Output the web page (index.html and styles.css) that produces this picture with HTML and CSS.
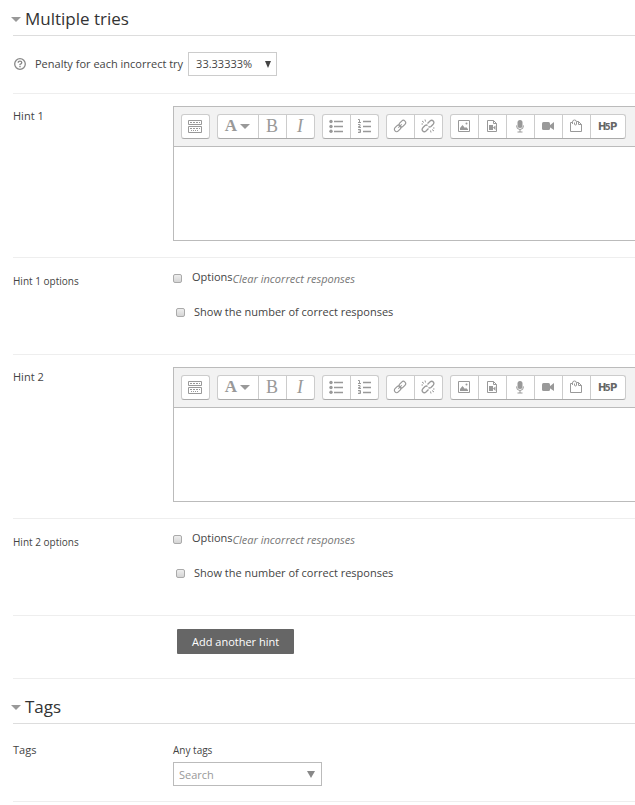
FILE: index.html
```html
<!DOCTYPE html>
<html lang="en">

<head>
    <meta charset="UTF-8">
    <meta name="viewport" content="width=device-width, initial-scale=1.0">
    <title>Multiple tries</title>
    <link rel="stylesheet" href="styles.css">
</head>

<body>
    <!-- Toolbar icons, shared by both editors -->
    <svg class="icon-sprite" aria-hidden="true">
        <symbol id="icon-toggle" viewBox="0 0 14 14">
            <path d="M.5 1.5h13v4H.5zM.5 7.5h13v6H.5z" fill="none" stroke="currentColor" />
            <path d="M2 3.5h10M2 9.5h10" stroke="currentColor" stroke-dasharray="2 1" />
            <path d="M3 11.5h8" stroke="currentColor" stroke-dasharray="1 1" />
        </symbol>
        <symbol id="icon-bullets" viewBox="0 0 14 14">
            <circle cx="2" cy="2.5" r="1.7" fill="currentColor" />
            <circle cx="2" cy="7.5" r="1.7" fill="currentColor" />
            <circle cx="2" cy="12.3" r="1.7" fill="currentColor" />
            <path d="M5 2.5h9M5 7.5h9M5 12.5h9" stroke="currentColor" stroke-width="1.4" />
        </symbol>
        <symbol id="icon-numbers" viewBox="0 0 14 14">
            <path d="M1 .5h1.5v3M1 3.5h3M1 5.5h2v2H1.5v1H4M1 10.5h2.5v3H1M1.5 12h2" fill="none" stroke="currentColor" />
            <path d="M6 2.5h8M6 7.5h8M6 12.5h8" stroke="currentColor" stroke-width="1.4" />
        </symbol>
        <symbol id="icon-link" viewBox="0 0 14 14">
            <g fill="none" stroke="currentColor" stroke-width="1.2" transform="rotate(-45 7 7)">
                <rect x="0" y="4.7" width="7.5" height="4.6" rx="2.3" />
                <rect x="6.5" y="4.7" width="7.5" height="4.6" rx="2.3" />
                <path d="M4.5 7h5" stroke-width="1" />
            </g>
        </symbol>
        <symbol id="icon-unlink" viewBox="0 0 14 14">
            <g fill="none" stroke="currentColor" stroke-width="1.3">
                <path d="M6.5 4.500 9 2q1.800-1.500 3.200 0t0 3.200L10 7.500Q8.500 8.500 7.500 7.500" />
                <path d="M7.500 9.500 5 12q-1.800 1.500-3.200 0t0-3.200L4 6.500Q5.500 5.500 6.500 6.500" />
                <path d="M1 2l2 1.500M4 .5l.5 2M13 12l-2-1.500M10 13.500l-.5-2M.5 5h1.500M12 9h1.500" stroke-width="1" />
            </g>
        </symbol>
        <symbol id="icon-image" viewBox="0 0 14 14">
            <path d="M1.5 1.5h11v11h-11z" fill="none" stroke="currentColor" />
            <path d="M3 11V9l2.500-3L8 9l1-1 2 2v1z" fill="currentColor" />
            <circle cx="9.500" cy="4.500" r="1" fill="currentColor" />
        </symbol>
        <symbol id="icon-media" viewBox="0 0 14 14">
            <path d="M2.500 1.500h6l3 3v8h-9zM8.500 1.500v3h3" fill="none" stroke="currentColor" />
            <path d="M4 6h4v5H4zM8 8.500l2.500-2v4.500z" fill="currentColor" />
        </symbol>
        <symbol id="icon-mic" viewBox="0 0 14 14">
            <rect x="4.500" y="1" width="5" height="8" rx="2.500" fill="currentColor" />
            <path d="M3.500 6.500q0 4 3.500 4t3.500-4M7 10.500v2.500M4.500 13h5" fill="none" stroke="currentColor" />
        </symbol>
        <symbol id="icon-video" viewBox="0 0 14 14">
            <rect x="1" y="3" width="8" height="8" rx="1.500" fill="currentColor" />
            <path d="M8.500 6.500 13 3v8L8.500 8z" fill="currentColor" />
        </symbol>
        <symbol id="icon-files" viewBox="0 0 14 14">
            <path d="M3 3.500H1.500v9h11V5.500L9.500 2.500H8M9.500 2.500v3h3" fill="none" stroke="currentColor" />
            <path d="M3.500 5V3q0-2 2-2t2 2v2q0 1-1 1t-1-1V3.500" fill="none" stroke="currentColor" />
        </symbol>
        <symbol id="icon-h5p" viewBox="0 0 20 14">
            <text y="11"><tspan x="0">H</tspan><tspan x="7" class="h5p-five">5</tspan><tspan x="12">P</tspan></text>
        </symbol>
    </svg>

    <form class="question-form">
        <fieldset>
            <legend><span class="caret"></span>Multiple tries</legend>

            <div class="penalty-row">
                <button type="button" class="help" aria-label="Help with penalty for each incorrect try">
                    <svg viewBox="0 0 12 12" aria-hidden="true">
                        <circle cx="6" cy="6" r="5.300" fill="none" stroke="currentColor" stroke-width="1.300" />
                        <path d="M4.200 4.800Q4.200 3.200 6 3.200t1.800 1.500Q7.800 5.500 6 6.300v1" fill="none" stroke="currentColor" stroke-width="1.300" />
                        <path d="M5.300 8h1.400v1.300H5.300z" fill="currentColor" />
                    </svg>
                </button>
                <label for="penalty">Penalty for each incorrect try</label>
                <div class="select-box">
                    <select id="penalty">
                        <option>33.33333%</option>
                    </select>
                    <span class="arrow" aria-hidden="true"></span>
                </div>
            </div>

            <div class="row hint-row">
                <label class="row-label" for="hint1">Hint 1</label>
                <div class="editor">
                    <div class="toolbar">
                        <div class="group">
                            <button type="button" aria-label="Show more buttons"><svg><use href="#icon-toggle" /></svg></button>
                        </div>
                        <div class="group">
                            <button type="button" class="styles" aria-label="Paragraph styles">A<span class="caret"></span></button>
                            <button type="button" class="serif" aria-label="Bold">B</button>
                            <button type="button" class="serif italic" aria-label="Italic">I</button>
                        </div>
                        <div class="group">
                            <button type="button" aria-label="Unordered list"><svg><use href="#icon-bullets" /></svg></button>
                            <button type="button" aria-label="Ordered list"><svg><use href="#icon-numbers" /></svg></button>
                        </div>
                        <div class="group">
                            <button type="button" aria-label="Link"><svg><use href="#icon-link" /></svg></button>
                            <button type="button" aria-label="Unlink"><svg><use href="#icon-unlink" /></svg></button>
                        </div>
                        <div class="group">
                            <button type="button" aria-label="Insert image"><svg><use href="#icon-image" /></svg></button>
                            <button type="button" aria-label="Insert media"><svg><use href="#icon-media" /></svg></button>
                            <button type="button" aria-label="Record audio"><svg><use href="#icon-mic" /></svg></button>
                            <button type="button" aria-label="Record video"><svg><use href="#icon-video" /></svg></button>
                            <button type="button" aria-label="Manage files"><svg><use href="#icon-files" /></svg></button>
                            <button type="button" class="h5p" aria-label="Insert H5P"><svg><use href="#icon-h5p" /></svg></button>
                        </div>
                    </div>
                    <textarea id="hint1"></textarea>
                </div>
            </div>

            <div class="row options-row">
                <span class="row-label small">Hint 1 options</span>
                <div class="options">
                    <div class="option">
                        <input type="checkbox" id="clear1">
                        <label for="clear1">Options<em>Clear incorrect responses</em></label>
                    </div>
                    <div class="option indent">
                        <input type="checkbox" id="shownum1">
                        <label for="shownum1">Show the number of correct responses</label>
                    </div>
                </div>
            </div>

            <div class="row hint-row">
                <label class="row-label" for="hint2">Hint 2</label>
                <div class="editor">
                    <div class="toolbar">
                        <div class="group">
                            <button type="button" aria-label="Show more buttons"><svg><use href="#icon-toggle" /></svg></button>
                        </div>
                        <div class="group">
                            <button type="button" class="styles" aria-label="Paragraph styles">A<span class="caret"></span></button>
                            <button type="button" class="serif" aria-label="Bold">B</button>
                            <button type="button" class="serif italic" aria-label="Italic">I</button>
                        </div>
                        <div class="group">
                            <button type="button" aria-label="Unordered list"><svg><use href="#icon-bullets" /></svg></button>
                            <button type="button" aria-label="Ordered list"><svg><use href="#icon-numbers" /></svg></button>
                        </div>
                        <div class="group">
                            <button type="button" aria-label="Link"><svg><use href="#icon-link" /></svg></button>
                            <button type="button" aria-label="Unlink"><svg><use href="#icon-unlink" /></svg></button>
                        </div>
                        <div class="group">
                            <button type="button" aria-label="Insert image"><svg><use href="#icon-image" /></svg></button>
                            <button type="button" aria-label="Insert media"><svg><use href="#icon-media" /></svg></button>
                            <button type="button" aria-label="Record audio"><svg><use href="#icon-mic" /></svg></button>
                            <button type="button" aria-label="Record video"><svg><use href="#icon-video" /></svg></button>
                            <button type="button" aria-label="Manage files"><svg><use href="#icon-files" /></svg></button>
                            <button type="button" class="h5p" aria-label="Insert H5P"><svg><use href="#icon-h5p" /></svg></button>
                        </div>
                    </div>
                    <textarea id="hint2"></textarea>
                </div>
            </div>

            <div class="row options-row">
                <span class="row-label small">Hint 2 options</span>
                <div class="options">
                    <div class="option">
                        <input type="checkbox" id="clear2">
                        <label for="clear2">Options<em>Clear incorrect responses</em></label>
                    </div>
                    <div class="option indent">
                        <input type="checkbox" id="shownum2">
                        <label for="shownum2">Show the number of correct responses</label>
                    </div>
                </div>
            </div>

            <div class="row add-row">
                <button type="button" class="add-hint">Add another hint</button>
            </div>
        </fieldset>

        <fieldset class="tags">
            <legend><span class="caret"></span>Tags</legend>
            <div class="row tags-row">
                <label class="row-label" for="tags">Tags</label>
                <div class="tags-field">
                    <span class="small">Any tags</span>
                    <div class="search-box">
                        <input type="text" id="tags" placeholder="Search">
                        <span class="arrow" aria-hidden="true"></span>
                    </div>
                </div>
            </div>
        </fieldset>
    </form>
</body>

</html>
```

FILE: styles.css
```css
* {
    box-sizing: border-box;
    margin: 0;
    padding: 0;
}

body {
    font-family: "Open Sans", sans-serif;
    font-size: 11px;
    line-height: 16px;
    color: #444;
    background-color: #fff;
}

button,
input,
select,
textarea {
    font: inherit;
    color: inherit;
}

button {
    cursor: pointer;
}

.icon-sprite {
    display: none;
}

.question-form {
    padding: 6px 0 0 13px;
}

fieldset {
    border: none;
    min-width: 0;
}

legend {
    display: flex;
    align-items: center;
    gap: 4px;
    width: 100%;
    height: 30px;
    padding-bottom: 3px;
    border-bottom: 1px solid #ddd;
    font-size: 17px;
    color: #333;
}

.caret {
    border: 5px solid transparent;
    border-top-color: #999;
    border-bottom: none;
}

legend .caret {
    margin-left: -2px;
}

.small {
    font-size: 10px;
}

/* Penalty */
.penalty-row {
    display: flex;
    align-items: center;
    height: 57px;
    padding-bottom: 2px;
}

.help {
    width: 12px;
    height: 12px;
    margin: 0 9px 0 1px;
    border: none;
    background: none;
    color: #888;
}

.help svg {
    display: block;
}

.select-box,
.search-box {
    position: relative;
}

.select-box {
    margin-left: 5px;
}

.select-box select {
    display: block;
    appearance: none;
    width: 89px;
    height: 24px;
    padding: 0 7px;
    border: 1px solid #ccc;
    background-color: #fff;
}

.arrow {
    position: absolute;
    top: 9px;
    right: 6px;
    border: 3px solid transparent;
    border-top: 7px solid #444;
    border-bottom: none;
    pointer-events: none;
}

/* Rows */
.row {
    display: flex;
    border-top: 1px solid #eee;
}

.row-label {
    flex: 0 0 160px;
}

.hint-row {
    padding: 12px 0 16px;
}

.hint-row .row-label {
    padding-top: 2px;
}

/* Editor */
.editor {
    flex: 1;
    min-width: 0;
    border: 1px solid #bbb;
    border-right: none;
}

.toolbar {
    display: flex;
    gap: 7px;
    padding: 7px;
    background-color: #f2f2f2;
    border-bottom: 1px solid #bbb;
}

.group {
    display: flex;
    border: 1px solid #ccc;
    border-bottom-color: #aaa;
    border-radius: 3px;
    background-color: #fff;
}

.group button {
    display: flex;
    align-items: center;
    justify-content: center;
    width: 28px;
    height: 23px;
    padding: 0 1px 1px 0;
    border: none;
    border-right: 1px solid #ccc;
    background: none;
    color: #999;
}

.group button:last-child {
    width: 27px;
    border-right: none;
}

.group svg {
    width: 14px;
    height: 14px;
}

.group .styles {
    gap: 3px;
    width: 41px;
    font-family: "Liberation Serif", serif;
    font-size: 17px;
    font-weight: bold;
}

.group .serif {
    font-family: "Liberation Serif", serif;
    font-size: 18px;
}

.group .italic {
    font-style: italic;
}

.group .h5p:last-child {
    width: 34px;
    color: #666;
}

.h5p svg {
    width: 20px;
    fill: currentColor;
    font-family: "DejaVu Sans", sans-serif;
    font-size: 10px;
    font-weight: bold;
}

.h5p-five {
    font-size: 8px;
}

.editor textarea {
    display: block;
    width: 100%;
    height: 93px;
    padding: 6px;
    border: none;
    outline: none;
    resize: none;
}

/* Hint options */
.options-row {
    padding: 12px 0 34px;
}

.options-row .row-label {
    padding-top: 3px;
}

.options {
    display: flex;
    flex-direction: column;
    gap: 18px;
}

.option {
    display: flex;
    align-items: center;
    gap: 10px;
    height: 16px;
}

.option.indent {
    gap: 9px;
    padding-left: 3px;
}

.option label {
    display: flex;
}

.option em {
    padding-top: 2px;
    color: #777;
}

.option input {
    appearance: none;
    width: 9px;
    height: 9px;
    border: 1px solid #aaa;
    border-radius: 2px;
    background: linear-gradient(#eee, #d5d5d5);
}

.option input:checked {
    background: #666;
}

.add-row {
    padding: 13px 0 24px 164px;
    border-bottom: 1px solid #eee;
}

.add-hint {
    height: 25px;
    padding: 0 15px;
    border: none;
    border-radius: 1px;
    background-color: #666;
    color: #fff;
}

/* Tags */
.tags {
    margin-top: 15px;
    border-bottom: 1px solid #eee;
}

.tags-row {
    padding: 18px 0 15px;
    border-top: none;
}

.tags-field {
    display: grid;
    gap: 4px;
}

.search-box input {
    display: block;
    width: 149px;
    height: 24px;
    padding: 0 5px;
    border: 1px solid #bbb;
    outline: none;
}

.search-box input::placeholder {
    color: #999;
}

.search-box .arrow {
    right: 7px;
    border-width: 7px 4px 0;
    border-top-color: #888;
}
```
